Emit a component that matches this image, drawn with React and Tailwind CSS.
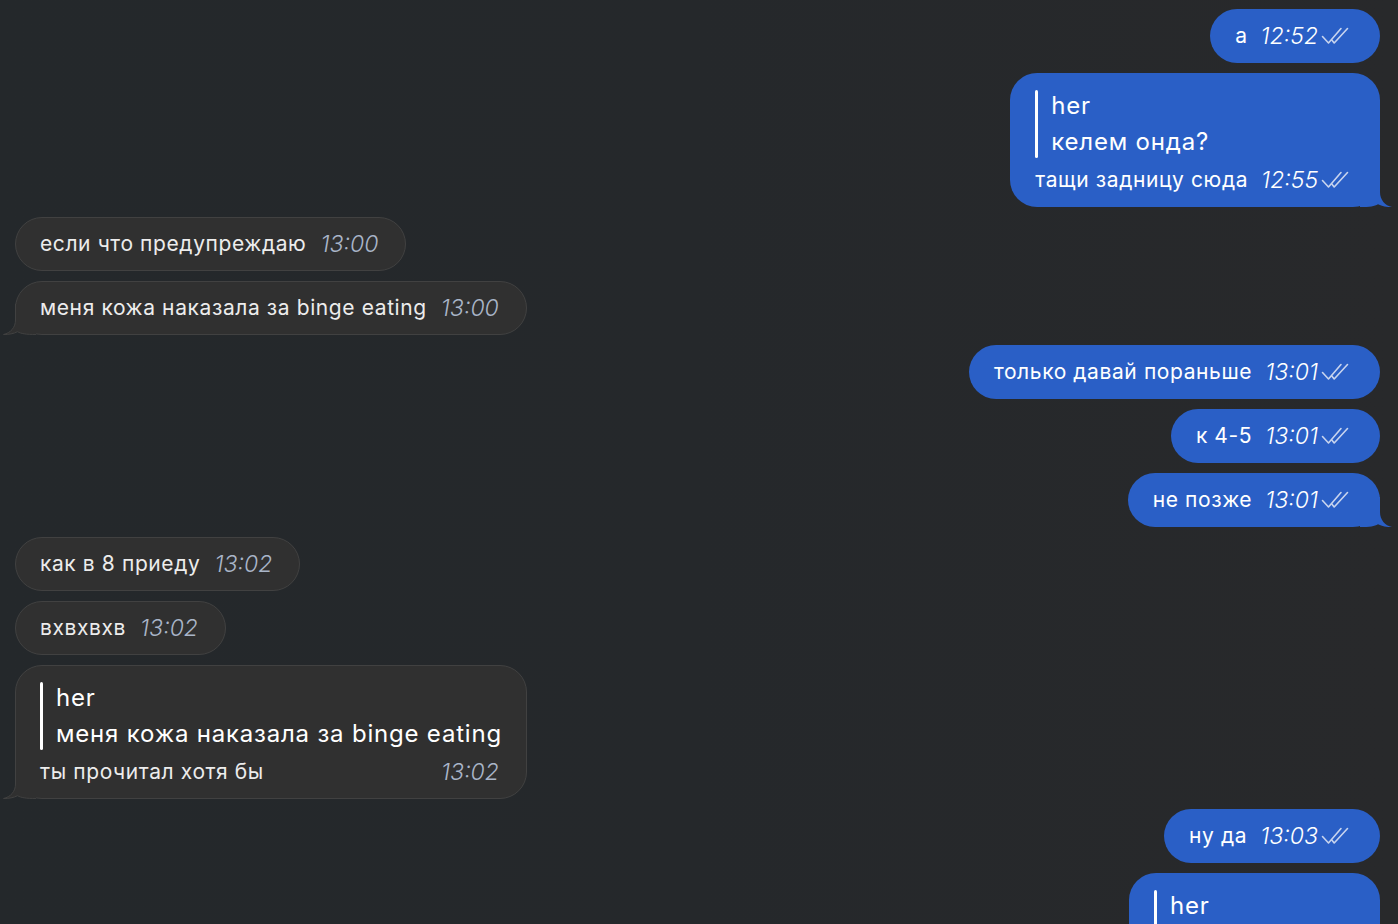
import React from 'react'

const font = { fontFamily: 'Inter, "Noto Sans", sans-serif' }

function Checks() {
  return (
    <svg width="31" height="18" viewBox="0 0 31 18" fill="none" className="ml-[3px] shrink-0">
      <path d="M1.5 9.5 L7.5 16 L20 1.5" stroke="#c8d4ee" strokeWidth="1.6" strokeLinecap="round" strokeLinejoin="round" />
      <path d="M10.8 13 L13.2 16 L26.5 1.5" stroke="#c8d4ee" strokeWidth="1.6" strokeLinecap="round" strokeLinejoin="round" />
    </svg>
  )
}

function OutTail() {
  return (
    <svg width="32" height="30" viewBox="0 0 32 30" className="absolute right-[-12px] bottom-0">
      <path d="M0 0 H20 V15 C20 23 25 28.5 32 30 C26.5 30 22 29.3 18 27.2 C14.5 29.2 10 30 0 30 Z" fill="#2a5fc6" />
    </svg>
  )
}

function InTail() {
  return (
    <svg width="33" height="31" viewBox="0 0 33 31" className="absolute left-[-13px] bottom-[-1px]">
      <path d="M12.5 0 V16 C12.5 23.5 7.5 29 0.5 30.5 C6 30.5 10.5 29.8 14.5 27.7 C18 29.7 23 30.5 33 30.5 V0 Z" fill="#303030" />
      <path d="M12.5 0 V16 C12.5 23.5 7.5 29 0.5 30.5 C6 30.5 10.5 29.8 14.5 27.7 C18 29.7 23 30.5 33 30.5" fill="none" stroke="#414141" strokeWidth="1" />
    </svg>
  )
}

function Out({ text, time, tail }) {
  return (
    <div className="self-end relative h-[54px] rounded-[27px] bg-[#2a5fc6] pl-[25px] pr-[28px] flex items-center">
      {tail && <OutTail />}
      <span className="relative text-[21px] text-white tracking-[0.6px]">{text}</span>
      <span className="relative ml-[13px] text-[23px] italic font-light text-white">{time}</span>
      <span className="relative"><Checks /></span>
    </div>
  )
}

function In({ text, time, tail }) {
  return (
    <div className="self-start relative h-[54px] rounded-[27px] bg-[#303030] border border-[#414141] pl-[24px] pr-[27px] flex items-center">
      {tail && <InTail />}
      <span className="relative text-[21px] text-[#ececec] tracking-[0.6px]">{text}</span>
      <span className="relative ml-[14px] text-[23px] italic font-light text-[#a9b5c8]">{time}</span>
    </div>
  )
}

function Quote({ author, quote }) {
  return (
    <div className="flex items-stretch gap-[13px]">
      <div className="w-[3px] my-[2px] rounded-full bg-white" />
      <div className="flex flex-col text-[24px] leading-[36px] tracking-[0.8px] text-white">
        <span>{author}</span>
        <span>{quote}</span>
      </div>
    </div>
  )
}

export default function App() {
  return (
    <div style={font} className="h-[924px] overflow-hidden bg-gradient-to-r from-[#24282b] via-[#25282b] to-[#28292b]">
      <div className="flex flex-col gap-[10px] pt-[9px] pl-[15px] pr-[18px]">
        <Out text="а" time="12:52" />

        <div className="self-end relative rounded-[27px] bg-[#2a5fc6] pl-[25px] pr-[28px] pt-[15px] pb-[11px] flex flex-col">
          <OutTail />
          <div className="relative">
            <Quote author="her" quote="келем онда?" />
          </div>
          <div className="relative flex items-center mt-[4px] h-[32px]">
            <span className="text-[21px] text-white tracking-[0.6px]">тащи задницу сюда</span>
            <span className="ml-[13px] text-[23px] italic font-light text-white">12:55</span>
            <Checks />
          </div>
        </div>

        <In text="если что предупреждаю" time="13:00" />
        <In text="меня кожа наказала за binge eating" time="13:00" tail />

        <Out text="только давай пораньше" time="13:01" />
        <Out text="к 4-5" time="13:01" />
        <Out text="не позже" time="13:01" tail />

        <In text="как в 8 приеду" time="13:02" />
        <In text="вхвхвхв" time="13:02" />

        <div className="self-start relative rounded-[27px] bg-[#303030] border border-[#414141] pl-[24px] pr-[24px] pt-[14px] pb-[10px] flex flex-col">
          <InTail />
          <div className="relative">
            <Quote author="her" quote="меня кожа наказала за binge eating" />
          </div>
          <div className="relative flex items-center justify-between mt-[4px] h-[32px]">
            <span className="text-[21px] text-[#ececec] tracking-[0.6px]">ты прочитал хотя бы</span>
            <span className="mr-[3px] text-[23px] italic font-light text-[#a9b5c8]">13:02</span>
          </div>
        </div>

        <Out text="ну да" time="13:03" />

        <div className="self-end relative w-[251px] rounded-[27px] bg-[#2a5fc6] pl-[25px] pr-[28px] pt-[15px] pb-[11px] flex flex-col">
          <Quote author="her" quote="как в 8 приеду" />
          <div className="flex items-center mt-[4px] h-[32px]">
            <span className="text-[21px] text-white tracking-[0.6px]">ок</span>
            <span className="ml-[13px] text-[23px] italic font-light text-white">13:03</span>
            <Checks />
          </div>
        </div>
      </div>
    </div>
  )
}
